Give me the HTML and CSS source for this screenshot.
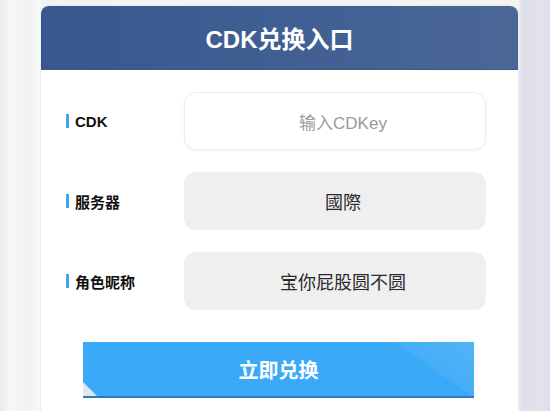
FILE: index.html
```html
<!DOCTYPE html>
<html lang="zh">
<head>
<meta charset="utf-8">
<title>CDK兑换入口</title>
<link rel="stylesheet" href="styles.css">
</head>
<body>
<div class="page">
  <div class="card">
    <div class="card-header">CDK兑换入口</div>
    <div class="card-body">
      <div class="row">
        <div class="label"><span class="bar"></span>CDK</div>
        <div class="field field-input placeholder">输入CDKey</div>
      </div>
      <div class="row">
        <div class="label"><span class="bar"></span>服务器</div>
        <div class="field field-filled">國際</div>
      </div>
      <div class="row">
        <div class="label"><span class="bar"></span>角色昵称</div>
        <div class="field field-filled">宝你屁股圆不圆</div>
      </div>
      <div class="btn">
        <span class="btn-shine"></span>
        <span class="btn-corner"></span>
        <span class="btn-text">立即兑换</span>
      </div>
    </div>
  </div>
</div>
</body>
</html>
```

FILE: styles.css
```css
html, body {
  margin: 0;
  padding: 0;
}
body {
  width: 550px;
  height: 411px;
  overflow: hidden;
  font-family: "Liberation Sans", "Noto Sans CJK SC", sans-serif;
  background:
    linear-gradient(90deg, #ececee 0, #f6f6f6 10px, #f2f2f2 30px, #fafafa 40px, transparent 41px),
    linear-gradient(180deg, #f3f3f3 0, #f1f1f3 100%);
}
.page {
  position: relative;
  height: 411px;
  padding-top: 6px;
  padding-left: 41px;
  box-sizing: border-box;
  background:
    linear-gradient(90deg, transparent 518px, #f4f4f8 518px, #dedfe8 522px, #e2e3ec 540px, #dcdde6 550px),
    linear-gradient(160deg, transparent 0, transparent 88%, #e2e2ec 88%);
}
.card {
  width: 477px;
  height: 405px;
  background: #ffffff;
  border-radius: 8px 8px 0 0;
  box-shadow: 0 0 2px rgba(0, 0, 0, 0.12);
  overflow: hidden;
}
.card-header {
  height: 64px;
  display: flex;
  align-items: center;
  justify-content: center;
  color: #ffffff;
  font-size: 24px;
  font-weight: 700;
  background: linear-gradient(90deg, #385790 0%, #3e5d91 40%, #4a6796 100%);
  border-bottom: 1px solid #3a5a8a;
  box-sizing: border-box;
}
.card-body {
  padding: 22px 0 0 25px;
}
.row {
  display: flex;
  align-items: center;
  height: 58px;
  margin-bottom: 22px;
}
.row:nth-child(3) {
  margin-bottom: 32px;
}
.label {
  width: 118px;
  display: flex;
  align-items: center;
  font-size: 15px;
  font-weight: 700;
  color: #111111;
}
.bar {
  display: inline-block;
  width: 3px;
  height: 14px;
  background: #3ea3ea;
  margin-right: 6px;
}
.field {
  width: 302px;
  height: 58px;
  box-sizing: border-box;
  border-radius: 12px;
  display: flex;
  align-items: center;
  justify-content: center;
  padding-left: 16px;
  font-size: 18px;
  color: #2a2a2a;
}
.field-input {
  background: #ffffff;
  border: 1px solid #ededed;
  box-shadow: 0 1px 3px rgba(0, 0, 0, 0.05);
}
.placeholder {
  color: #9a9a9a;
  font-size: 17px;
}
.field-filled {
  background: #efefef;
}
.btn {
  position: relative;
  margin-left: 17px;
  width: 391px;
  height: 56px;
  background: #3aa9f7;
  border-bottom: 2px solid #2a7bc0;
  box-sizing: border-box;
  display: flex;
  align-items: center;
  justify-content: center;
  overflow: hidden;
}
.btn-shine {
  position: absolute;
  right: 0;
  top: 0;
  width: 82px;
  height: 100%;
  background: linear-gradient(215deg, rgba(255, 255, 255, 0.12) 0, rgba(255, 255, 255, 0.06) 50%, transparent 50%);
}
.btn-corner {
  position: absolute;
  left: 0;
  bottom: 0;
  width: 0;
  height: 0;
  border-left: 14px solid #dfe8f2;
  border-top: 14px solid transparent;
}
.btn-text {
  position: relative;
  color: #ffffff;
  font-size: 20px;
  font-weight: 700;
  font-family: "Noto Sans CJK SC", sans-serif;
}
```
